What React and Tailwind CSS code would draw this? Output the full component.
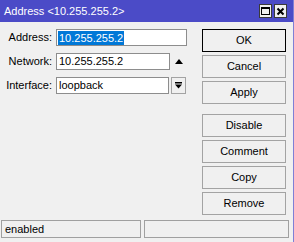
import React from "react";

const font = { fontFamily: '"Liberation Sans", Arial, sans-serif' };

const topButtons = ["OK", "Cancel", "Apply"];
const bottomButtons = ["Disable", "Comment", "Copy", "Remove"];

const Btn = ({ label, primary }) => (
  <button
    type="button"
    className={
      "h-[23px] w-[84px] bg-[#f0f0f0] text-[11px] leading-none text-black " +
      (primary ? "border border-black" : "border border-[#a3a3a3]")
    }
  >
    {label}
  </button>
);

const Field = ({ label, children }) => (
  <div className="flex h-[17px] items-center">
    <span className="w-[53px] pr-[1px] text-right text-[11px] text-black">{label}</span>
    <div className="ml-[3px] flex items-center">{children}</div>
  </div>
);

export default function App() {
  return (
    <div
      className="flex h-[242px] w-[294px] flex-col overflow-hidden border-r border-[#7f7fd6] bg-[#f0f0f0]"
      style={font}
    >
      {/* Title bar */}
      <div className="flex h-[22px] shrink-0 items-center bg-[#4b4bc7] pl-[4px] pr-[6px]">
        <span className="flex-1 text-[11px] text-white">Address &lt;10.255.255.2&gt;</span>
        <div className="flex gap-[2px]">
          <div className="flex h-[14px] w-[13px] items-center justify-center border border-[#3a3a3a] bg-[#f0f0f0]">
            <div className="h-[8px] w-[9px] border border-t-2 border-black" />
          </div>
          <div className="flex h-[14px] w-[13px] items-center justify-center border border-[#3a3a3a] bg-[#f0f0f0]">
            <svg width="9" height="9" viewBox="0 0 9 9">
              <path d="M1.5 1.5 L7.5 7.5 M7.5 1.5 L1.5 7.5" stroke="black" strokeWidth="2" />
            </svg>
          </div>
        </div>
      </div>

      <div className="flex flex-1">
        {/* Form */}
        <div className="flex flex-1 flex-col gap-[5px] pt-[7px]">
          <Field label="Address:">
            <div className="flex h-[17px] w-[131px] items-center border border-[#8d8d8d] bg-white px-[1px]">
              <span className="bg-[#0078d7] px-[1px] text-[11px] leading-[14px] text-white">10.255.255.2</span>
            </div>
          </Field>
          <div className="mt-[2px]">
            <Field label="Network:">
              <div className="flex h-[17px] w-[114px] items-center border border-[#8d8d8d] bg-white px-[2px] text-[11px] text-black">
                10.255.255.2
              </div>
              <svg className="ml-[5px]" width="8" height="5" viewBox="0 0 8 5">
                <path d="M0 5 L4 0 L8 5 Z" fill="black" />
              </svg>
            </Field>
          </div>
          <div className="mt-[2px]">
            <Field label="Interface:">
              <div className="flex h-[17px] w-[113px] items-center border border-[#8d8d8d] bg-white px-[2px] text-[11px] text-black">
                loopback
              </div>
              <div className="ml-[2px] flex h-[17px] w-[15px] items-center justify-center border border-[#a3a3a3] bg-[#f0f0f0]">
                <svg width="7" height="7" viewBox="0 0 7 7">
                  <rect x="0" y="0" width="7" height="1.5" fill="black" />
                  <path d="M0 2.5 L7 2.5 L3.5 6.5 Z" fill="black" />
                </svg>
              </div>
            </Field>
          </div>
        </div>

        {/* Buttons */}
        <div className="flex flex-col gap-[3px] pr-[7px] pt-[7px]">
          {topButtons.map((b) => (
            <Btn key={b} label={b} primary={b === "OK"} />
          ))}
          <div className="h-[4px]" />
          {bottomButtons.map((b) => (
            <Btn key={b} label={b} />
          ))}
        </div>
      </div>

      {/* Status bar */}
      <div className="flex h-[23px] shrink-0 gap-[3px] px-[1px] pt-[1px]">
        <div className="flex h-[18px] w-[140px] items-center border border-[#a0a0a0] px-[3px] text-[11px] text-black">
          enabled
        </div>
        <div className="mr-[3px] h-[18px] flex-1 border border-[#a0a0a0]" />
      </div>
    </div>
  );
}
